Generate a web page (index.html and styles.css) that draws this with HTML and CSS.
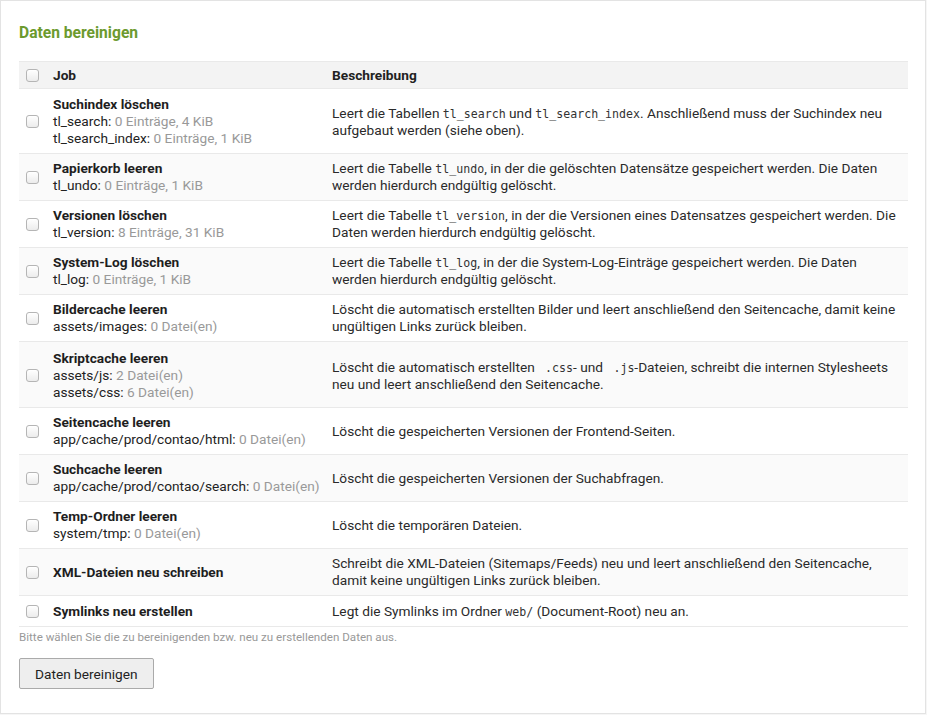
FILE: index.html
```html
<!DOCTYPE html>
<html lang="de">
<head>
<meta charset="utf-8">
<title>Daten bereinigen</title>
<link rel="stylesheet" href="styles.css">
</head>
<body>
<div class="panel">
  <h2 class="legend">Daten bereinigen</h2>
  <table class="jobs">
    <colgroup><col class="c-check"><col class="c-job"><col class="c-desc"></colgroup>
    <thead>
      <tr><th><span class="cb"></span></th><th>Job</th><th>Beschreibung</th></tr>
    </thead>
    <tbody>
      <tr class="tall">
        <td><span class="cb"></span></td>
        <td><strong>Suchindex löschen</strong><br>tl_search: <span class="dim">0 Einträge, 4 KiB</span><br>tl_search_index: <span class="dim">0 Einträge, 1 KiB</span></td>
        <td>Leert die Tabellen <code>tl_search</code> und <code>tl_search_index</code>. Anschließend muss der Suchindex neu aufgebaut werden (siehe oben).</td>
      </tr>
      <tr>
        <td><span class="cb"></span></td>
        <td><strong>Papierkorb leeren</strong><br>tl_undo: <span class="dim">0 Einträge, 1 KiB</span></td>
        <td>Leert die Tabelle <code>tl_undo</code>, in der die gelöschten Datensätze gespeichert werden. Die Daten werden hierdurch endgültig gelöscht.</td>
      </tr>
      <tr>
        <td><span class="cb"></span></td>
        <td><strong>Versionen löschen</strong><br>tl_version: <span class="dim">8 Einträge, 31 KiB</span></td>
        <td>Leert die Tabelle <code>tl_version</code>, in der die Versionen eines Datensatzes gespeichert werden. Die Daten werden hierdurch endgültig gelöscht.</td>
      </tr>
      <tr>
        <td><span class="cb"></span></td>
        <td><strong>System-Log löschen</strong><br>tl_log: <span class="dim">0 Einträge, 1 KiB</span></td>
        <td>Leert die Tabelle <code>tl_log</code>, in der die System-Log-Einträge gespeichert werden. Die Daten werden hierdurch endgültig gelöscht.</td>
      </tr>
      <tr>
        <td><span class="cb"></span></td>
        <td><strong>Bildercache leeren</strong><br>assets/images: <span class="dim">0 Datei(en)</span></td>
        <td>Löscht die automatisch erstellten Bilder und leert anschließend den Seitencache, damit keine ungültigen Links zurück bleiben.</td>
      </tr>
      <tr class="tall taller">
        <td><span class="cb"></span></td>
        <td><strong>Skriptcache leeren</strong><br>assets/js: <span class="dim">2 Datei(en)</span><br>assets/css: <span class="dim">6 Datei(en)</span></td>
        <td>Löscht die automatisch erstellten <code> .css</code>- und <code> .js</code>-Dateien, schreibt die internen Stylesheets neu und leert anschließend den Seitencache.</td>
      </tr>
      <tr>
        <td><span class="cb"></span></td>
        <td><strong>Seitencache leeren</strong><br>app/cache/prod/contao/html: <span class="dim">0 Datei(en)</span></td>
        <td>Löscht die gespeicherten Versionen der Frontend-Seiten.</td>
      </tr>
      <tr>
        <td><span class="cb"></span></td>
        <td><strong>Suchcache leeren</strong><br>app/cache/prod/contao/search: <span class="dim">0 Datei(en)</span></td>
        <td>Löscht die gespeicherten Versionen der Suchabfragen.</td>
      </tr>
      <tr>
        <td><span class="cb"></span></td>
        <td><strong>Temp-Ordner leeren</strong><br>system/tmp: <span class="dim">0 Datei(en)</span></td>
        <td>Löscht die temporären Dateien.</td>
      </tr>
      <tr>
        <td><span class="cb"></span></td>
        <td><strong>XML-Dateien neu schreiben</strong></td>
        <td>Schreibt die XML-Dateien (Sitemaps/Feeds) neu und leert anschließend den Seitencache, damit keine ungültigen Links zurück bleiben.</td>
      </tr>
      <tr class="single">
        <td><span class="cb"></span></td>
        <td><strong>Symlinks neu erstellen</strong></td>
        <td>Legt die Symlinks im Ordner <code>web/</code> (Document-Root) neu an.</td>
      </tr>
    </tbody>
  </table>
  <p class="help">Bitte wählen Sie die zu bereinigenden bzw. neu zu erstellenden Daten aus.</p>
  <button class="btn" type="button">Daten bereinigen</button>
</div>
</body>
</html>
```
FILE: styles.css
```css
html, body {
  margin: 0;
  padding: 0;
  background: #f6f6f6;
}
body {
  font-family: Roboto, "Liberation Sans", sans-serif;
  font-size: 13.7px;
  color: #222;
}
.panel {
  box-sizing: border-box;
  width: 926px;
  height: 714px;
  background: #fff;
  border: 1px solid #e3e3e3;
  padding: 23px 17px 0 18px;
}
.legend {
  margin: 0 0 19px;
  font-size: 15.6px;
  line-height: 18px;
  font-weight: 700;
  color: #6c9a2e;
}
.jobs {
  width: 889px;
  border-collapse: collapse;
  table-layout: fixed;
  line-height: 17px;
}
.c-check { width: 27px; }
.c-job { width: 279px; }
.jobs th, .jobs td {
  padding: 6px 7px;
  text-align: left;
  vertical-align: middle;
  border-bottom: 1px solid #e9e9e9;
}
.jobs td:nth-child(2) { padding-right: 2px; white-space: nowrap; }
.jobs tr.tall td { padding-top: 7px; }
.jobs tr.taller td { padding-top: 8px; padding-bottom: 6px; }
.jobs tr.single td { padding-top: 7px; }
.jobs thead th {
  padding-top: 5px;
  padding-bottom: 4px;
  background: #f3f3f3;
  border-top: 1px solid #e9e9e9;
  font-weight: 700;
  color: #222;
}
.jobs tbody tr:nth-child(even) td {
  background: #fafafa;
}
.jobs strong { font-weight: 700; color: #1e1e1e; }
.dim { color: #999; }
.jobs td:nth-child(3) { color: #2a2a2a; }
code {
  font-family: "DejaVu Sans Mono", monospace;
  font-size: 11.6px;
  line-height: 12px;
  color: #333;
  white-space: pre;
}
.cb {
  display: block;
  box-sizing: border-box;
  width: 13px;
  height: 13px;
  border: 1px solid #b5b5b5;
  border-radius: 3px;
  background: linear-gradient(#ffffff, #ececec);
  box-shadow: inset 0 1px 0 #fff;
}
.help {
  margin: 3px 0 0;
  font-size: 11.6px;
  line-height: 14px;
  color: #999;
}
.btn {
  margin-top: 14px;
  height: 31px;
  padding: 0 15px;
  font-family: Roboto, "Liberation Sans", sans-serif;
  font-size: 13.7px;
  color: #222;
  background: #eee;
  border: 1px solid #aaa;
  border-radius: 2px;
}
```
